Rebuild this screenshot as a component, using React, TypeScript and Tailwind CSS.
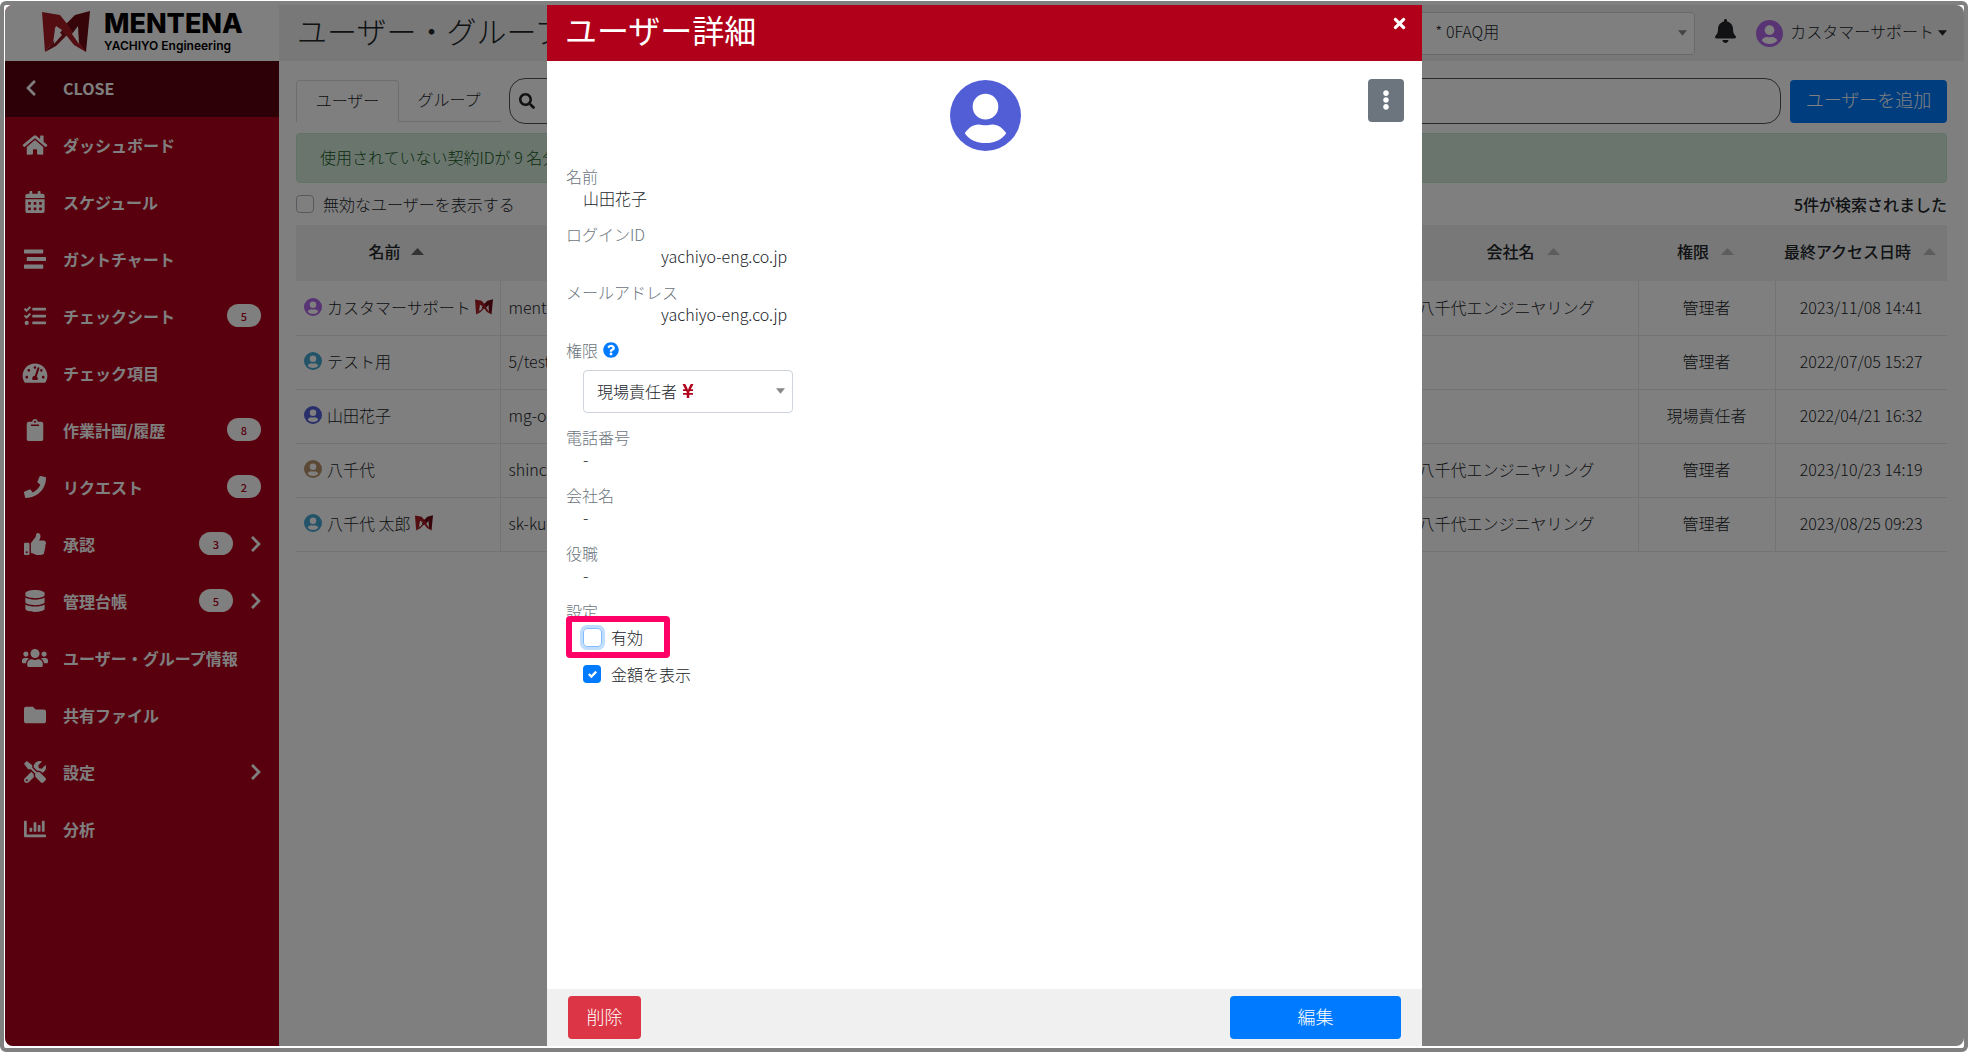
import type { ReactNode } from "react";
import type { IconType } from "react-icons";
import {
  FaBell,
  FaCalendarAlt,
  FaChartBar,
  FaChevronLeft,
  FaChevronRight,
  FaClipboard,
  FaDatabase,
  FaEllipsisV,
  FaFolder,
  FaHome,
  FaPhone,
  FaQuestionCircle,
  FaSearch,
  FaStream,
  FaTachometerAlt,
  FaTasks,
  FaThumbsUp,
  FaTimes,
  FaTools,
  FaUsers,
  FaYenSign,
} from "react-icons/fa";

type MenuItem = {
  label: string;
  icon: IconType;
  count?: number;
  expandable?: boolean;
};

const MENU: MenuItem[] = [
  { label: "ダッシュボード", icon: FaHome },
  { label: "スケジュール", icon: FaCalendarAlt },
  { label: "ガントチャート", icon: FaStream },
  { label: "チェックシート", icon: FaTasks, count: 5 },
  { label: "チェック項目", icon: FaTachometerAlt },
  { label: "作業計画/履歴", icon: FaClipboard, count: 8 },
  { label: "リクエスト", icon: FaPhone, count: 2 },
  { label: "承認", icon: FaThumbsUp, count: 3, expandable: true },
  { label: "管理台帳", icon: FaDatabase, count: 5, expandable: true },
  { label: "ユーザー・グループ情報", icon: FaUsers },
  { label: "共有ファイル", icon: FaFolder },
  { label: "設定", icon: FaTools, expandable: true },
  { label: "分析", icon: FaChartBar },
];

const USERS = [
  { name: "カスタマーサポート", color: "text-[#b068e8]", staff: true, login: "mentena-support", company: "八千代エンジニヤリング", role: "管理者", last: "2023/11/08 14:41" },
  { name: "テスト用", color: "text-[#46a6d0]", staff: false, login: "5/test", company: "", role: "管理者", last: "2022/07/05 15:27" },
  { name: "山田花子", color: "text-[#525ed6]", staff: false, login: "mg-oono", company: "", role: "現場責任者", last: "2022/04/21 16:32" },
  { name: "八千代", color: "text-[#b8936a]", staff: false, login: "shinchi", company: "八千代エンジニヤリング", role: "管理者", last: "2023/10/23 14:19" },
  { name: "八千代 太郎", color: "text-[#46a6d0]", staff: true, login: "sk-kubo", company: "八千代エンジニヤリング", role: "管理者", last: "2023/08/25 09:23" },
];

function UserIcon({ className }: { className: string }) {
  return (
    <svg viewBox="0 0 72 72" aria-hidden="true" className={className}>
      <circle cx="36" cy="36" r="36" fill="currentColor" />
      <circle cx="36" cy="27" r="13" fill="white" />
      <path
        d="M15 54C18 49 23 45 29 45C32 45 33 46 36 46C39 46 40 45 43 45C49 45 54 49 57 54C52 61 45 64 36 64C27 64 20 61 15 54Z"
        fill="white"
      />
    </svg>
  );
}

function LogoMark({ className }: { className: string }) {
  return (
    <svg viewBox="0 0 48 42" aria-hidden="true" className={className}>
      <path d="M48 0L33 4L22 15L35 32L44 41Z" fill="#6a0b13" />
      <path d="M24 14L11 31L3 41L14 35L27 22Z" fill="#8a141e" />
      <path d="M0 1L18 4L26 14L44 41L32 34L20 19L14 15L11 31L3 41Z" fill="#a81c24" />
      <path d="M13 16L20 24L12 33Z" fill="white" />
      <path d="M36 15L30 23L37 33Z" fill="white" />
    </svg>
  );
}

function SortMark({ active }: { active?: boolean }) {
  return (
    <svg
      viewBox="0 0 13 7"
      aria-hidden="true"
      className={active ? "h-[7px] w-[13px] text-[#666666]" : "h-[7px] w-[13px] text-[#bbbbbb]"}
    >
      <path d="M0 7L6.5 0L13 7Z" fill="currentColor" />
    </svg>
  );
}

function Caret({ className }: { className: string }) {
  return (
    <svg viewBox="0 0 10 6" aria-hidden="true" className={className}>
      <path d="M0 0H10L5 6Z" fill="currentColor" />
    </svg>
  );
}

function Sidebar() {
  return (
    <aside className="flex w-[274px] shrink-0 flex-col bg-[#b0001a] font-bold text-white">
      <a href="#" className="flex h-14 shrink-0 items-center gap-[14px] bg-white pb-0.5 pl-[37px] text-black">
        <LogoMark className="h-[42px] w-12" />
        <span className="flex flex-col font-['Inter','Liberation_Sans',sans-serif]">
          <span className="text-[27px] leading-7 font-extrabold">MENTENA</span>
          <span className="text-xs leading-4 font-semibold">YACHIYO Engineering</span>
        </span>
      </a>
      <button type="button" className="flex h-14 shrink-0 items-center bg-[#58000d] pb-0.5 pl-[17px] text-left">
        <FaChevronLeft aria-hidden="true" className="size-[18px]" />
        <span className="pl-[23px]">CLOSE</span>
      </button>
      <nav>
        {MENU.map(({ label, icon: Icon, count, expandable }) => (
          <a key={label} href="#" className="flex h-[57px] items-center pr-[18px] pb-0.5 pl-[17px]">
            <Icon aria-hidden="true" className="h-[22px] w-[26px]" />
            <span className="flex-1 pl-[15px]">{label}</span>
            {count !== undefined && (
              <span className="flex h-[23px] w-[34px] items-center justify-center rounded-full bg-white text-[11px] font-medium text-[#b0001a]">
                {count}
              </span>
            )}
            {expandable && <FaChevronRight aria-hidden="true" className="-mr-1 ml-[14px] size-[18px]" />}
          </a>
        ))}
      </nav>
    </aside>
  );
}

function TopBar() {
  return (
    <header className="flex h-14 items-center bg-[#f0f0f0] pr-[17px] pl-[18px]">
      <h1 className="flex-1 pb-1.5 text-[30px] whitespace-nowrap">ユーザー・グループ情報</h1>
      <span className="grid w-[288px] items-center">
        <select
          aria-label="現場"
          className="col-start-1 row-start-1 h-[43px] appearance-none rounded border border-[#ced4da] bg-white pb-1 pl-[27px]"
        >
          <option>* 0FAQ用</option>
        </select>
        <Caret className="pointer-events-none col-start-1 row-start-1 mr-2 h-[6px] w-[9px] justify-self-end text-[#888888]" />
      </span>
      <button type="button" aria-label="通知" className="ml-5 pb-1">
        <FaBell className="h-6 w-[21px]" />
      </button>
      <button type="button" className="ml-5 flex items-center">
        <UserIcon className="size-[27px] text-[#b068e8]" />
        <span className="pb-1 pl-[7px]">カスタマーサポート</span>
        <Caret className="ml-1 h-[6px] w-[9px]" />
      </button>
    </header>
  );
}

function UserTable() {
  return (
    <table className="w-full table-fixed border-collapse">
      <colgroup>
        <col className="w-[204px]" />
        <col />
        <col className="w-[280px]" />
        <col className="w-[137px]" />
        <col className="w-[172px]" />
      </colgroup>
      <thead>
        <tr className="h-14 bg-[#f0f0f0]">
          <th className="pb-1 font-medium">
            <span className="flex items-center justify-center gap-[10px] pr-1">名前 <SortMark active /></span>
          </th>
          <th className="pb-1 font-medium">ログインID</th>
          <th className="pb-1 pl-[50px] font-medium">
            <span className="flex items-center justify-center gap-3">会社名 <SortMark /></span>
          </th>
          <th className="pb-1 font-medium">
            <span className="flex items-center justify-center gap-3 pr-0.5">権限 <SortMark /></span>
          </th>
          <th className="pb-1 font-medium">
            <span className="flex items-center justify-center gap-3 pr-0.5">最終アクセス日時 <SortMark /></span>
          </th>
        </tr>
      </thead>
      <tbody>
        {USERS.map((user) => (
          <tr key={user.name} className="h-[54px] border-b border-[#e6e6e6]">
            <td className="border-r border-[#e6e6e6] pb-0.5 pl-2">
              <span className="flex items-center">
                <UserIcon className={`size-[18px] shrink-0 ${user.color}`} />
                <span className="pl-[5px] whitespace-nowrap">{user.name}</span>
                {user.staff && <LogoMark className="ml-1 h-4 w-[18px]" />}
              </span>
            </td>
            <td className="truncate border-r border-[#e6e6e6] pb-0.5 pl-2">{user.login}</td>
            <td className="border-r border-[#e6e6e6] pb-0.5 pl-[60px] whitespace-nowrap">{user.company}</td>
            <td className="border-r border-[#e6e6e6] pb-0.5 text-center">{user.role}</td>
            <td className="pb-0.5 text-center whitespace-nowrap">{user.last}</td>
          </tr>
        ))}
      </tbody>
    </table>
  );
}

function UserPage() {
  return (
    <main className="px-[17px]">
      <div className="flex items-center pt-[17px]">
        <div role="tablist" className="flex h-[42px] shrink-0">
          <button type="button" role="tab" aria-selected="true" className="w-[103px] rounded-t border border-b-0 border-[#dddddd] pb-1">
            ユーザー
          </button>
          <button type="button" role="tab" aria-selected="false" className="w-[102px] border-b border-[#dddddd] pr-0.5 pb-1">
            グループ
          </button>
        </div>
        <div className="ml-2 flex h-[46px] flex-1 items-center rounded-2xl border border-[#555555] pl-[9px]">
          <FaSearch aria-hidden="true" className="size-4" />
          <input type="search" aria-label="検索" className="h-full flex-1 px-3 outline-none" />
        </div>
        <button type="button" className="ml-[9px] h-[43px] w-[157px] rounded bg-[#007bff] pb-1 text-lg leading-6 text-white">
          ユーザーを追加
        </button>
      </div>
      <p className="mt-[9px] flex h-[50px] items-center rounded border border-[#c3e6cb] bg-[#d4edda] pb-0.5 pl-[23px] text-[#155724]">
        使用されていない契約IDが 9 名分あります
      </p>
      <div className="flex h-[42px] items-center justify-between">
        <label className="flex items-center gap-[9px]">
          <input type="checkbox" className="size-[18px] appearance-none rounded border border-[#adb5bd]" />
          無効なユーザーを表示する
        </label>
        <span className="font-medium">5件が検索されました</span>
      </div>
      <UserTable />
    </main>
  );
}

function Field({ label, children }: { label: ReactNode; children: ReactNode }) {
  return (
    <div className="mb-[15px]">
      <dt className="flex h-[22px] items-center text-[#6c757d]">{label}</dt>
      <dd className="flex h-[21px] items-center pl-[17px]">{children}</dd>
    </div>
  );
}

function UserDialog() {
  return (
    <section role="dialog" aria-modal="true" aria-labelledby="dialog-title" className="flex w-[875px] flex-col bg-white">
      <header className="flex h-14 shrink-0 items-start justify-between bg-[#b0001a] pr-[14px] pl-[18px] text-white">
        <h2 id="dialog-title" className="text-[32px] leading-[48px] font-normal">ユーザー詳細</h2>
        <button type="button" aria-label="閉じる" className="mt-[10px]">
          <FaTimes className="size-[17px]" />
        </button>
      </header>
      <div className="flex-1 pt-[18px] pr-[18px] pl-[19px]">
        <div className="grid grid-cols-[1fr_auto_1fr] items-start">
          <UserIcon className="col-start-2 mt-px size-[71px] text-[#525ed6]" />
          <button
            type="button"
            aria-label="メニュー"
            className="flex h-[43px] w-9 items-center justify-center justify-self-end rounded bg-[#6c757d] pb-0.5 text-white"
          >
            <FaEllipsisV className="h-5 w-[18px]" />
          </button>
        </div>
        <dl className="pt-[14px]">
          <Field label="名前">山田花子</Field>
          <Field label="ログインID"><span className="pl-[78px]">yachiyo-eng.co.jp</span></Field>
          <Field label="メールアドレス"><span className="pl-[78px]">yachiyo-eng.co.jp</span></Field>
          <div className="mb-[13px]">
            <dt className="flex h-[22px] items-center gap-[5px] text-[#6c757d]">
              権限 <FaQuestionCircle aria-hidden="true" className="size-4 text-[#007bff]" />
            </dt>
            <dd className="pt-[9px] pl-[17px]">
              <button
                type="button"
                aria-haspopup="listbox"
                className="flex h-[43px] w-[210px] items-center rounded border border-[#ced4da] pr-[7px] pb-0.5 pl-[13px]"
              >
                現場責任者
                <FaYenSign aria-label="金額表示" className="ml-[5px] h-4 w-3 text-[#b0001a]" />
                <Caret className="ml-auto h-[6px] w-[9px] text-[#888888]" />
              </button>
            </dd>
          </div>
          <Field label="電話番号">-</Field>
          <Field label="会社名">-</Field>
          <Field label="役職">-</Field>
          <div>
            <dt className="h-4 overflow-hidden leading-[22px] text-[#6c757d]">設定</dt>
            <dd>
              <label className="flex h-[42px] w-[104px] items-center gap-[9px] rounded border-6 border-[#ff0066] pl-[11px]">
                <input
                  type="checkbox"
                  className="size-[19px] appearance-none rounded border border-[#80bdff] ring-3 ring-[#bfdeff]"
                />
                有効
              </label>
              <label className="mt-1 flex h-6 items-center gap-[10px] pl-[17px]">
                <span className="grid place-items-center">
                  <input
                    type="checkbox"
                    defaultChecked
                    className="col-start-1 row-start-1 size-[18px] appearance-none rounded bg-[#007bff]"
                  />
                  <svg viewBox="0 0 8 8" aria-hidden="true" className="pointer-events-none col-start-1 row-start-1 size-[9px]">
                    <path d="M6.564.75l-3.59 3.612-1.538-1.55L0 4.26l2.974 2.99L8 2.193z" fill="white" />
                  </svg>
                </span>
                金額を表示
              </label>
            </dd>
          </div>
        </dl>
      </div>
      <footer className="flex h-[57px] shrink-0 items-center justify-between bg-[#f0f0f0] px-[21px] text-lg leading-6 text-white">
        <button type="button" className="h-[43px] w-[73px] rounded bg-[#dc3545] pb-1">削除</button>
        <button type="button" className="h-[43px] w-[171px] rounded bg-[#007bff] pb-1">編集</button>
      </footer>
    </section>
  );
}

export default function App() {
  return (
    <div className="flex h-screen bg-white py-px font-['Noto_Sans_CJK_JP',sans-serif] text-base leading-6 font-light text-[#212529]">
      <div className="flex flex-1 rounded-md border-4 border-[#808080] bg-white pb-[2px] pl-px">
        <div className="relative flex min-w-0 flex-1 overflow-hidden rounded-lg">
          <Sidebar />
          <div className="min-w-0 flex-1">
            <TopBar />
            <UserPage />
          </div>
          <div className="absolute inset-0 flex justify-center bg-black/50">
            <UserDialog />
          </div>
        </div>
      </div>
    </div>
  );
}
